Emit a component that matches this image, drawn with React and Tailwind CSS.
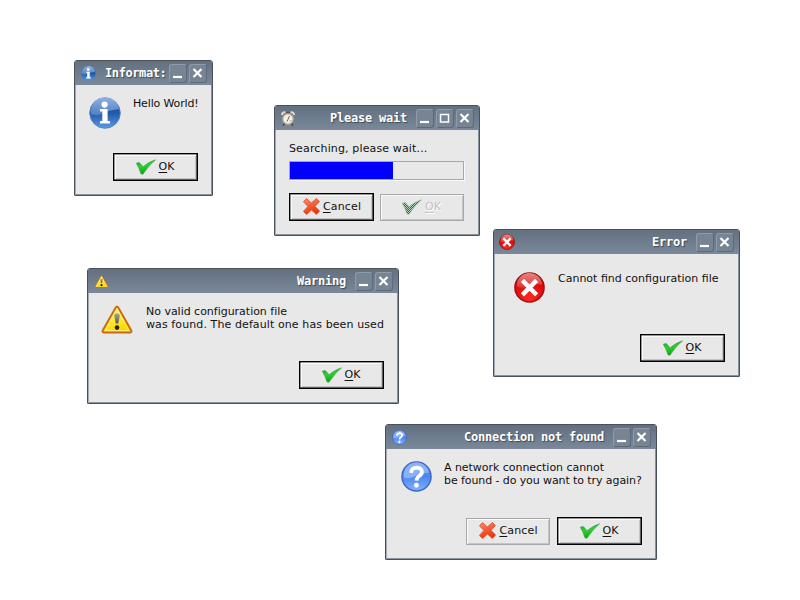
import React from "react";

function InfoIcon({ className }) {
  return (
    <svg viewBox="0 0 32 32" className={className}>
      <defs>
        <linearGradient id="infoFill" x1="0" y1="0" x2="0" y2="1">
          <stop offset="0" stopColor="#2a5fae" />
          <stop offset="0.5" stopColor="#2258a8" />
          <stop offset="1" stopColor="#5b9be4" />
        </linearGradient>
        <linearGradient id="infoGloss" x1="0" y1="0" x2="0" y2="1">
          <stop offset="0" stopColor="#a9c4ea" />
          <stop offset="1" stopColor="#5c8acb" />
        </linearGradient>
      </defs>
      <circle cx="16" cy="16" r="15.3" fill="url(#infoFill)" stroke="#4f7fc4" strokeWidth="0.9" />
      <path d="M2 17A14 14 0 0 1 30 12Q20 13 13 17Q7 19 2 17Z" fill="url(#infoGloss)" opacity="0.8" />
      <circle cx="15.6" cy="7.6" r="3.1" fill="#fff" />
      <path d="M11 12H18.600V24H21V26.500H11V24H13.300V14.400H11Z" fill="#fff" />
    </svg>
  );
}

function ErrorIcon({ className }) {
  return (
    <svg viewBox="0 0 32 32" className={className}>
      <defs>
        <radialGradient id="errFill" cx="0.5" cy="0.85" r="0.8">
          <stop offset="0" stopColor="#ff2b20" />
          <stop offset="0.6" stopColor="#e01010" />
          <stop offset="1" stopColor="#c00808" />
        </radialGradient>
        <linearGradient id="errGloss" x1="0" y1="0" x2="0" y2="1">
          <stop offset="0" stopColor="#f6b0b0" />
          <stop offset="1" stopColor="#e23c3c" />
        </linearGradient>
      </defs>
      <circle cx="16" cy="16" r="15" fill="url(#errFill)" stroke="#a01212" strokeWidth="1.6" />
      <path d="M3 15A13 13 0 0 1 29 13Q21 12 15 15Q8 17.500 3 15Z" fill="url(#errGloss)" opacity="0.75" />
      <path d="M10.300 10.300L21.700 22M21.700 10.300L10.300 22" stroke="#fff" strokeWidth="4.600" strokeLinecap="square" />
    </svg>
  );
}

function WarningIcon({ className }) {
  return (
    <svg viewBox="0 0 32 29" className={className}>
      <defs>
        <linearGradient id="warnFill" x1="0" y1="0" x2="0.3" y2="1">
          <stop offset="0" stopColor="#fffbb0" />
          <stop offset="0.45" stopColor="#fff04a" />
          <stop offset="1" stopColor="#ffd500" />
        </linearGradient>
        <linearGradient id="warnMark" x1="0" y1="0" x2="0" y2="1">
          <stop offset="0" stopColor="#a6a6a0" />
          <stop offset="1" stopColor="#5a5a52" />
        </linearGradient>
      </defs>
      <path d="M16 1.800Q16.800 1.800 17.400 2.800L30.300 25.500Q31 27.300 29.300 27.500H2.700Q1 27.300 1.700 25.500L14.600 2.800Q15.200 1.800 16 1.800Z" fill="url(#warnFill)" stroke="#c96a14" strokeWidth="1.900" />
      <path d="M16 4.500L28 25.600H4Z" fill="none" stroke="#ffef7a" strokeWidth="1" />
      <path d="M13.200 10.500Q13.500 8.300 16 8.300Q18.500 8.300 18.800 10.500L17.300 18.600H14.700Z" fill="url(#warnMark)" />
      <circle cx="16" cy="22.600" r="2.300" fill="#28220a" />
    </svg>
  );
}

function QuestionIcon({ className }) {
  return (
    <svg viewBox="0 0 32 32" className={className}>
      <defs>
        <linearGradient id="qFill" x1="0" y1="0" x2="0" y2="1">
          <stop offset="0" stopColor="#5c92f0" />
          <stop offset="0.5" stopColor="#4c86f0" />
          <stop offset="1" stopColor="#82b2ff" />
        </linearGradient>
      </defs>
      <circle cx="16" cy="16" r="15" fill="url(#qFill)" stroke="#3c66c4" strokeWidth="1.500" />
      <path d="M3 17A13 13 0 0 1 29 12Q21 12 14 16Q8 19 3 17Z" fill="#a8c6fa" opacity="0.650" />
      <path d="M10.500 12.300Q10.700 6.900 16.200 6.900Q21.600 7.100 21.600 11.500Q21.500 14 18.600 15.700Q16.200 17.200 16 20.200" fill="none" stroke="#fff" strokeWidth="3.800" />
      <circle cx="15.900" cy="25" r="2.500" fill="#fff" />
    </svg>
  );
}

function ClockIcon({ className }) {
  return (
    <svg viewBox="0 0 14 15" className={className}>
      <path d="M3.500 12.500L2 14.500M10.500 12.500L12 14.500" stroke="#4a4034" strokeWidth="1.300" />
      <path d="M1 4Q1 1 4.500 1.200M13 4Q13 1 9.500 1.200" fill="none" stroke="#e2dccf" strokeWidth="2" />
      <path d="M5 1.300H9" stroke="#5a4f3e" strokeWidth="1.200" />
      <circle cx="7" cy="8" r="5.200" fill="#f3f1e6" stroke="#b5ab98" strokeWidth="1.300" />
      <path d="M8.500 5L7 8.300L6 10.500" fill="none" stroke="#6a6656" strokeWidth="1" />
      <path d="M9 10.500L10.500 9" stroke="#8d8672" strokeWidth="0.900" />
    </svg>
  );
}

function CheckIcon({ disabled }) {
  return (
    <svg viewBox="0 0 20 16" className="h-4 w-5 shrink-0">
      <defs>
        <linearGradient id="checkFill" x1="0" y1="0" x2="0.3" y2="1">
          <stop offset="0" stopColor="#1f9a2c" />
          <stop offset="0.5" stopColor="#2cd032" />
          <stop offset="1" stopColor="#12a412" />
        </linearGradient>
        <pattern id="checkDither" width="2" height="2" patternUnits="userSpaceOnUse">
          <rect width="2" height="2" fill="#b4d4b8" />
          <rect width="1" height="1" fill="#2d6b3a" />
          <rect x="1" y="1" width="1" height="1" fill="#2d6b3a" />
        </pattern>
      </defs>
      <path
        d="M0.300 4.200L3.200 3.400L7.200 7.700Q12 3.300 19.600 0.800Q12.800 6.300 7 15.200L5 14.900Q3.200 8.800 0.300 4.200Z"
        fill={disabled ? "url(#checkDither)" : "url(#checkFill)"}
        stroke={disabled ? "#8fb095" : "#34a33c"}
        strokeWidth="0.600"
      />
    </svg>
  );
}

function CrossIcon() {
  return (
    <svg viewBox="0 0 17 17" className="h-[17px] w-[17px] shrink-0">
      <defs>
        <linearGradient id="crossFill" x1="0" y1="0" x2="0.400" y2="1">
          <stop offset="0" stopColor="#ff8a62" />
          <stop offset="0.500" stopColor="#f4603c" />
          <stop offset="1" stopColor="#e8370c" />
        </linearGradient>
      </defs>
      <path
        d="M3.500 0.500L8.300 4.900L13.400 0.500L16.500 3.500L12 8.300L16.600 13L13.400 16.500L8.400 12L3.600 16.500L0.400 13.400L4.900 8.400L0.400 3.700Z"
        fill="url(#crossFill)"
        stroke="#d9512c"
        strokeWidth="0.800"
        strokeLinejoin="round"
      />
    </svg>
  );
}

const CONTROL_PATHS = {
  min: "M4 13H13",
  max: "M4.500 5.500H12.500V13H4.500Z",
  close: "M4.500 5L12.500 13M12.500 5L4.500 13",
};

function Control({ kind }) {
  return (
    <div className="h-[19px] w-[18px] shrink-0 rounded-[3px] border border-[#8d9cab] border-r-[#5c6a79] border-b-[#5c6a79] bg-[#768494]">
      <svg viewBox="1 1 16 17" className="h-[17px] w-4">
        <path
          d={CONTROL_PATHS[kind]}
          fill="none"
          stroke="#fff"
          strokeWidth={kind === "max" ? 1.500 : 2.200}
        />
      </svg>
    </div>
  );
}

function Win({ place, title, icon, controls = ["min", "close"], titleClass = "mr-[9px] text-right tracking-[-0.22px]", children }) {
  return (
    <section
      className={`absolute flex flex-col rounded-t-[3px] rounded-b-[1px] border border-[#49525c] bg-[#e8e8e8] shadow-[inset_1px_0_0_#a2abb4,inset_-1px_-1px_0_#89939d] ${place}`}
    >
      <header className="flex h-6 shrink-0 items-center rounded-t-[2px] bg-linear-to-b from-[#627080] to-[#7a899a] px-[5px]">
        <div className="flex h-4 w-4 shrink-0 items-center justify-center">{icon}</div>
        <h1
          className={`min-w-0 flex-1 font-['DejaVu_Sans_Mono',monospace] text-[12px] leading-[25px] font-bold whitespace-pre text-white [text-shadow:1px_1px_1px_#3e4854] ${titleClass}`}
        >
          {title}
        </h1>
        <div className="flex gap-0.5">
          {controls.map((c) => (
            <Control key={c} kind={c} />
          ))}
        </div>
      </header>
      {children}
    </section>
  );
}

function Button({ label, icon, focused, disabled }) {
  const frame = focused
    ? "h-7 w-[85px] border border-black shadow-[inset_0_0_0_0.5px_#333,inset_-1px_-1px_0_#8a8a8a,inset_2px_2px_0_#fafafa,inset_-2px_-2px_0_#c4c4c4]"
    : "h-[27px] w-[84px] border border-[#a8a8a8] shadow-[inset_1px_1px_0_#fafafa,inset_-1px_-1px_0_#c4c4c4]";
  return (
    <button
      className={`flex shrink-0 items-center justify-center bg-[#e8e8e8] pb-px text-[11px] leading-[13px] ${frame} ${
        disabled ? "text-[#c2c2c2] [text-shadow:1px_1px_0_#fff]" : "text-[#111]"
      } ${label === "Cancel" ? "pl-px" : "pr-px"}`}
    >
      {icon}
      <span className={label === "Cancel" ? "ml-[3px] tracking-[0.15px]" : "ml-[3px]"}>
        <span className="underline decoration-1 underline-offset-2">{label[0]}</span>
        {label.slice(1)}
      </span>
    </button>
  );
}

function Message({ icon, lines, className, textClass }) {
  return (
    <div className={`flex items-start ${className}`}>
      {icon}
      <div className={`whitespace-pre text-[11px] leading-[13px] text-[#111] ${textClass}`}>
        {lines.map(([text, tracking]) => (
          <p key={text} className={tracking}>
            {text}
          </p>
        ))}
      </div>
    </div>
  );
}

function Actions({ className = "mr-3.5", children }) {
  return <footer className={`mt-auto mb-3.5 flex items-center justify-end ${className}`}>{children}</footer>;
}

export default function App() {
  return (
    <main className="relative h-[600px] w-[800px] overflow-hidden bg-white font-['DejaVu_Sans',sans-serif]">
      <Win
        place="left-[74px] top-[60px] h-[136px] w-[139px]"
        title="Informat:"
        titleClass="ml-[9px] tracking-[-0.4px]"
        icon={<InfoIcon className="h-[15px] w-[15px]" />}
      >
        <Message
          className="mt-3 ml-3.5"
          icon={<InfoIcon className="h-8 w-8 shrink-0" />}
          lines={[["Hello World!", "tracking-[-0.15px]"]]}
          textClass="ml-3"
        />
        <Actions>
          <Button label="OK" focused icon={<CheckIcon />} />
        </Actions>
      </Win>

      <Win
        place="left-[274px] top-[105px] h-[131px] w-[206px]"
        title="Please wait"
        controls={["min", "max", "close"]}
        icon={<ClockIcon className="h-[15px] w-3.5" />}
      >
        <p className="mt-3 ml-3.5 text-[11px] leading-[13px] tracking-[0.14px] whitespace-pre text-[#111]">
          Searching, please wait...
        </p>
        <div className="mt-[6px] ml-3.5 h-[19px] w-[175px] border border-[#a6a6a6] bg-[#e8e8e8] shadow-[1px_1px_0_#fafafa]">
          <div className="h-full w-[103px] bg-[#0000fe]" />
        </div>
        <Actions className="mr-[15px] gap-1.5">
          <Button label="Cancel" focused icon={<CrossIcon />} />
          <Button label="OK" disabled icon={<CheckIcon disabled />} />
        </Actions>
      </Win>

      <Win
        place="left-[493px] top-[229px] h-[148px] w-[247px]"
        title="Error"
        icon={<ErrorIcon className="h-4 w-4" />}
      >
        <Message
          className="mt-[18px] ml-5"
          icon={<ErrorIcon className="h-[31px] w-[31px] shrink-0" />}
          lines={[["Cannot find configuration file", "tracking-normal"]]}
          textClass="ml-[13px]"
        />
        <Actions>
          <Button label="OK" focused icon={<CheckIcon />} />
        </Actions>
      </Win>

      <Win
        place="left-[87px] top-[268px] h-[136px] w-[312px]"
        title="Warning"
        icon={<WarningIcon className="h-[13px] w-[15px]" />}
      >
        <Message
          className="mt-3 ml-[13px]"
          icon={<WarningIcon className="h-[29px] w-8 shrink-0" />}
          lines={[
            ["No valid configuration file", "tracking-[-0.02px]"],
            ["was found. The default one has been used", "tracking-[0.1px]"],
          ]}
          textClass="ml-[13px]"
        />
        <Actions>
          <Button label="OK" focused icon={<CheckIcon />} />
        </Actions>
      </Win>

      <Win
        place="left-[385px] top-[424px] h-[136px] w-[272px]"
        title="Connection not found"
        icon={<QuestionIcon className="h-[15px] w-[15px]" />}
      >
        <Message
          className="mt-3 ml-[15px]"
          icon={<QuestionIcon className="h-[31px] w-[31px] shrink-0" />}
          lines={[
            ["A network connection cannot", "tracking-[-0.04px]"],
            ["be found - do you want to try again?", "tracking-[-0.09px]"],
          ]}
          textClass="ml-3"
        />
        <Actions className="mr-3.5 gap-[7px]">
          <Button label="Cancel" icon={<CrossIcon />} />
          <Button label="OK" focused icon={<CheckIcon />} />
        </Actions>
      </Win>
    </main>
  );
}
